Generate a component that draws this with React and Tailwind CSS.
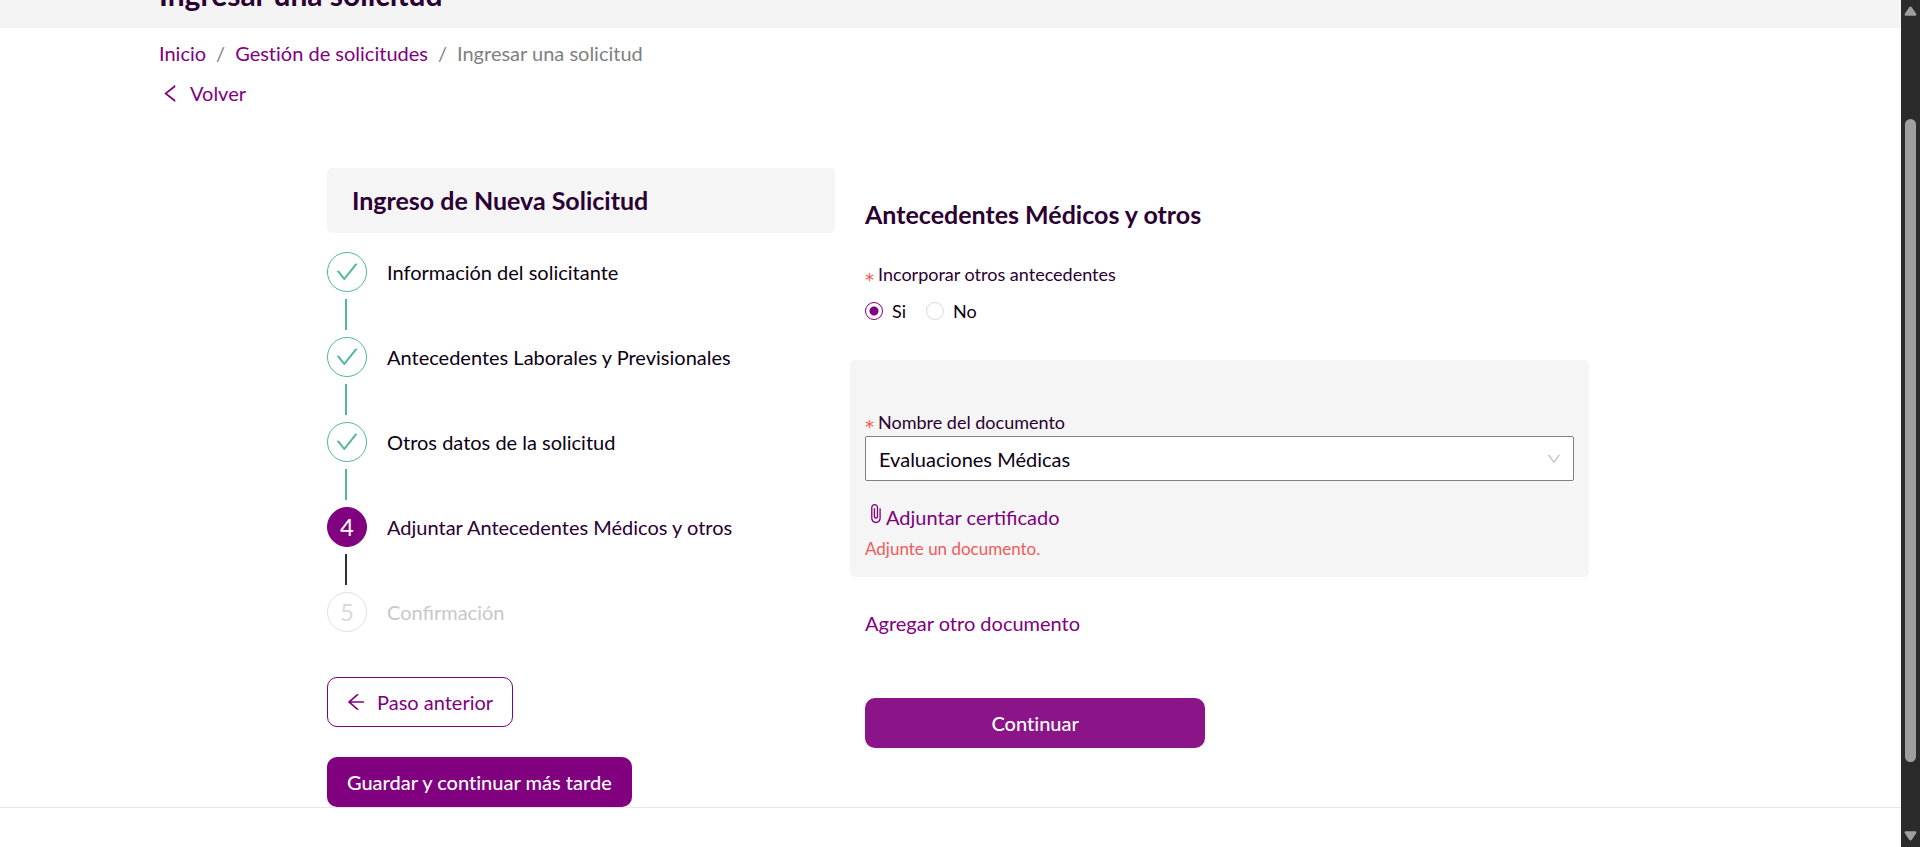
import { useState } from "react";
import {
  AiOutlineArrowLeft,
  AiOutlineCheck,
  AiOutlineDown,
  AiOutlineLeft,
} from "react-icons/ai";
import { MdAttachFile } from "react-icons/md";

const steps = [
  { label: "Información del solicitante", state: "done" },
  { label: "Antecedentes Laborales y Previsionales", state: "done" },
  { label: "Otros datos de la solicitud", state: "done" },
  { label: "Adjuntar Antecedentes Médicos y otros", state: "current" },
  { label: "Confirmación", state: "pending" },
];

const circleStyles = {
  done: "border-[#52b69a] text-[#52b69a]",
  current: "border-[#800080] bg-[#800080] text-white",
  pending: "border-[#e0e0e0] text-[#d9d9d9]",
};

const labelStyles = {
  done: "text-[#0d0014]",
  current: "text-[#2b0033]",
  pending: "text-[#c8c8c8]",
};

const lineStyles = { done: "bg-[#52b69a]", current: "bg-[#303030]", pending: "" };

function Step({ step, number, last }) {
  return (
    <li aria-current={step.state === "current" ? "step" : undefined}>
      <div className="flex items-center gap-5">
        <span
          className={`flex size-10 shrink-0 items-center justify-center rounded-full border text-2xl ${circleStyles[step.state]}`}
        >
          {step.state === "done" ? <AiOutlineCheck size={26} /> : number}
        </span>
        <span className={labelStyles[step.state]}>{step.label}</span>
      </div>
      {!last && (
        <div className={`my-[7px] ml-[18px] h-[31px] w-0.5 ${lineStyles[step.state]}`} />
      )}
    </li>
  );
}

function RequiredMark() {
  return (
    <span
      aria-hidden="true"
      className="mr-1 align-sub font-['DejaVu_Sans',sans-serif] leading-none text-[#ff4d4f]"
    >
      *
    </span>
  );
}

function RadioOption({ name, value, checked, onChange }) {
  return (
    <label className="flex items-center gap-[9px]">
      <input
        type="radio"
        name={name}
        value={value}
        checked={checked}
        onChange={onChange}
        className="size-[18px] appearance-none rounded-full border border-[#d9d9d9] bg-white checked:border-[#800080] checked:bg-[radial-gradient(circle,#800080_4px,white_5px)]"
      />
      {value}
    </label>
  );
}

function ScrollRail() {
  return (
    <div
      aria-hidden="true"
      className="flex w-[19px] shrink-0 flex-col items-center bg-[#2b2b2b] pt-1.5 pb-1.5"
    >
      <svg width="13" height="10" viewBox="0 0 13 10" fill="#9f9f9f">
        <path d="M6.5 0.3 L8 1.4 L12.3 8 Q12.8 9.6 11.5 9.7 H1.5 Q0.2 9.6 0.7 8 L5 1.4 Z" />
      </svg>
      <div className="flex w-full flex-1 flex-col items-center">
        <div className="grow-[103]" />
        <div className="w-[11px] grow-[643] rounded-full bg-[#9f9f9f]" />
        <div className="grow-[69]" />
      </div>
      <svg width="13" height="10" viewBox="0 0 13 10" fill="#9f9f9f">
        <path d="M6.5 9.7 L8 8.6 L12.3 2 Q12.8 0.4 11.5 0.3 H1.5 Q0.2 0.4 0.7 2 L5 8.6 Z" />
      </svg>
    </div>
  );
}

export default function App() {
  const [extra, setExtra] = useState("Si");

  return (
    <div className="flex h-screen bg-white font-['Lato',sans-serif] text-xl text-[#0d0014]">
      <div className="min-w-0 flex-1 overflow-hidden">
        <header className="flex h-7 items-end overflow-hidden bg-[#f4f4f4] px-[159px] pb-4">
          <h1 className="text-3xl leading-9 font-bold text-[#2b0033]">Ingresar una solicitud</h1>
        </header>

        <div className="px-[159px] pt-[11px]">
          <nav aria-label="Ruta de navegación">
            <ol className="flex gap-2.5 leading-7 text-[#808080]">
              <li>
                <a href="#inicio" className="text-[#800080]">Inicio</a>
              </li>
              <li aria-hidden="true">/</li>
              <li>
                <a href="#gestion" className="text-[#800080] [font-variant-ligatures:none]">
                  Gestión de solicitudes
                </a>
              </li>
              <li aria-hidden="true">/</li>
              <li>Ingresar una solicitud</li>
            </ol>
          </nav>
          <a href="#volver" className="mt-3 flex w-fit items-center gap-2 leading-7 text-[#800080]">
            <AiOutlineLeft size={23} />
            Volver
          </a>
        </div>

        <main className="mx-auto mt-[61px] grid max-w-[1277px] grid-cols-[508fr_739fr] gap-[15px] pl-[15px]">
          <section>
            <h2 className="rounded-[5px] bg-[#f5f5f5] px-[25px] py-4 text-[25px] leading-[33px] font-bold text-[#2b0033]">
              Ingreso de Nueva Solicitud
            </h2>
            <ol className="mt-[19px]">
              {steps.map((step, index) => (
                <Step
                  key={step.label}
                  step={step}
                  number={index + 1}
                  last={index === steps.length - 1}
                />
              ))}
            </ol>
            <div className="mt-[45px] flex flex-col items-start gap-[30px]">
              <button
                type="button"
                className="flex h-[50px] items-center gap-2.5 rounded-[10px] border border-[#800080] pr-[19px] pl-[17px] text-[#800080]"
              >
                <AiOutlineArrowLeft size={22} />
                Paso anterior
              </button>
              <button
                type="button"
                className="h-[50px] rounded-[10px] bg-[#800080] px-5 font-medium text-white [font-variant-ligatures:none]"
              >
                Guardar y continuar más tarde
              </button>
            </div>
          </section>

          <form onSubmit={(event) => event.preventDefault()} className="pt-[30px]">
            <div className="px-[15px]">
              <h2 className="text-[25px] leading-[33px] font-bold text-[#2b0033]">
                Antecedentes Médicos y otros
              </h2>
              <fieldset className="mt-[29px] text-lg leading-7">
                <legend className="text-[#2b0033]">
                  <RequiredMark />
                  Incorporar otros antecedentes
                </legend>
                <div className="mt-2 flex gap-5">
                  {["Si", "No"].map((value) => (
                    <RadioOption
                      key={value}
                      name="otros-antecedentes"
                      value={value}
                      checked={extra === value}
                      onChange={() => setExtra(value)}
                    />
                  ))}
                </div>
              </fieldset>
            </div>

            <div className="mt-[35px] rounded-[5px] bg-[#f5f5f5] px-[15px] pt-12 pb-[14px]">
              <label htmlFor="documento" className="block text-lg leading-7 text-[#2b0033]">
                <RequiredMark />
                Nombre del documento
              </label>
              <div className="grid items-center">
                <select
                  id="documento"
                  className="col-start-1 row-start-1 h-[45px] w-full appearance-none rounded-xs border border-[#808080] bg-white px-[13px]"
                >
                  <option>Evaluaciones Médicas</option>
                </select>
                <AiOutlineDown
                  size={16}
                  className="pointer-events-none col-start-1 row-start-1 mr-3 justify-self-end text-[#bfbfbf]"
                />
              </div>
              <button type="button" className="mt-[22px] flex leading-7 text-[#800080]">
                <MdAttachFile size={21} />
                Adjuntar certificado
              </button>
              <p role="alert" className="mt-1 text-[17px] leading-7 text-[#f15b5b]">
                Adjunte un documento.
              </p>
            </div>

            <div className="mt-8 flex flex-col items-start px-[15px]">
              <button type="button" className="leading-7 text-[#800080]">
                Agregar otro documento
              </button>
              <button
                type="submit"
                className="mt-[61px] h-[50px] w-[48%] rounded-[10px] bg-[#8b1588] font-medium text-white shadow-xs [font-variant-ligatures:none]"
              >
                Continuar
              </button>
            </div>
          </form>
        </main>
        <footer className="h-10 border-t border-[#e8e8e8]" />
      </div>
      <ScrollRail />
    </div>
  );
}
